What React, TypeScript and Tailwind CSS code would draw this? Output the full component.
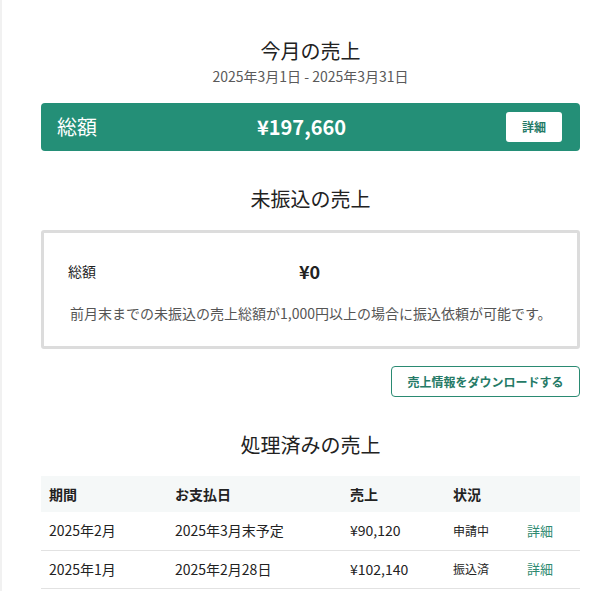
import React from 'react';

const rows = [
  { period: '2025年2月', payday: '2025年3月末予定', amount: '¥90,120', status: '申請中' },
  { period: '2025年1月', payday: '2025年2月28日', amount: '¥102,140', status: '振込済' },
];

const SectionTitle = ({ children, className = '' }: { children: React.ReactNode; className?: string }) => (
  <h2 className={`text-center text-[20px] leading-[28px] text-[#222] ${className}`}>{children}</h2>
);

const App = () => {
  return (
    <div
      className="min-h-screen bg-white border-l-2 border-[#f1f1f1] text-[#222]"
      style={{ fontFamily: '"Noto Sans CJK JP", "Noto Sans", sans-serif' }}
    >
      <div className="ml-[39px] w-[539px] pt-[37px]">
        {/* this month */}
        <SectionTitle>今月の売上</SectionTitle>
        <p className="mt-[1px] text-center text-[14px] leading-[20px] text-[#5a5a5a]">
          2025年3月1日 - 2025年3月31日
        </p>

        <div className="mt-[17px] h-[48px] rounded-[4px] bg-[#248f77] flex items-center pl-[16px] pr-[18px] text-white">
          <span className="w-[120px] text-[20px] leading-none">総額</span>
          <span className="flex-1 text-center text-[20px] font-bold leading-none pr-[80px]">¥197,660</span>
          <button className="h-[30px] w-[56px] rounded-[3px] bg-white text-[12px] font-bold text-[#257a66]">
            詳細
          </button>
        </div>

        {/* not yet transferred */}
        <SectionTitle className="mt-[34px]">未振込の売上</SectionTitle>

        <div className="mt-[17px] h-[119px] rounded-[3px] border-[3px] border-[#dcdcdc] pt-[26px] pl-[24px]">
          <div className="flex items-center h-[24px]">
            <span className="w-[231px] text-[14px]">総額</span>
            <span className="text-[18px] font-bold">¥0</span>
          </div>
          <p className="mt-[20px] pl-[2px] text-[14px] leading-[20px] text-[#555]">
            前月末までの未振込の売上総額が1,000円以上の場合に振込依頼が可能です。
          </p>
        </div>

        <div className="mt-[17px] flex justify-end">
          <button className="h-[31px] w-[189px] rounded-[4px] border border-[#2a8a72] text-[12px] font-bold text-[#257a66]">
            売上情報をダウンロードする
          </button>
        </div>

        {/* processed */}
        <SectionTitle className="mt-[34px]">処理済みの売上</SectionTitle>

        <table className="mt-[17px] w-full table-fixed border-collapse text-[14px]">
          <colgroup>
            <col className="w-[126px]" />
            <col className="w-[175px]" />
            <col className="w-[103px]" />
            <col className="w-[74px]" />
            <col />
          </colgroup>
          <thead>
            <tr className="h-[36px] bg-[#f5f8f8] text-left">
              <th className="pl-[8px] font-bold">期間</th>
              <th className="pl-[8px] font-bold">お支払日</th>
              <th className="pl-[8px] font-bold">売上</th>
              <th className="pl-[8px] font-bold">状況</th>
              <th />
            </tr>
          </thead>
          <tbody>
            {rows.map((r) => (
              <tr key={r.period} className="h-[38px] border-b border-[#e2e2e2]">
                <td className="pl-[8px]">{r.period}</td>
                <td className="pl-[8px]">{r.payday}</td>
                <td className="pl-[8px]">{r.amount}</td>
                <td className="pl-[8px] text-[12px]">{r.status}</td>
                <td className="pl-[8px] text-[13px] text-[#2e8a70]">詳細</td>
              </tr>
            ))}
          </tbody>
        </table>
      </div>
    </div>
  );
};

export default App;
